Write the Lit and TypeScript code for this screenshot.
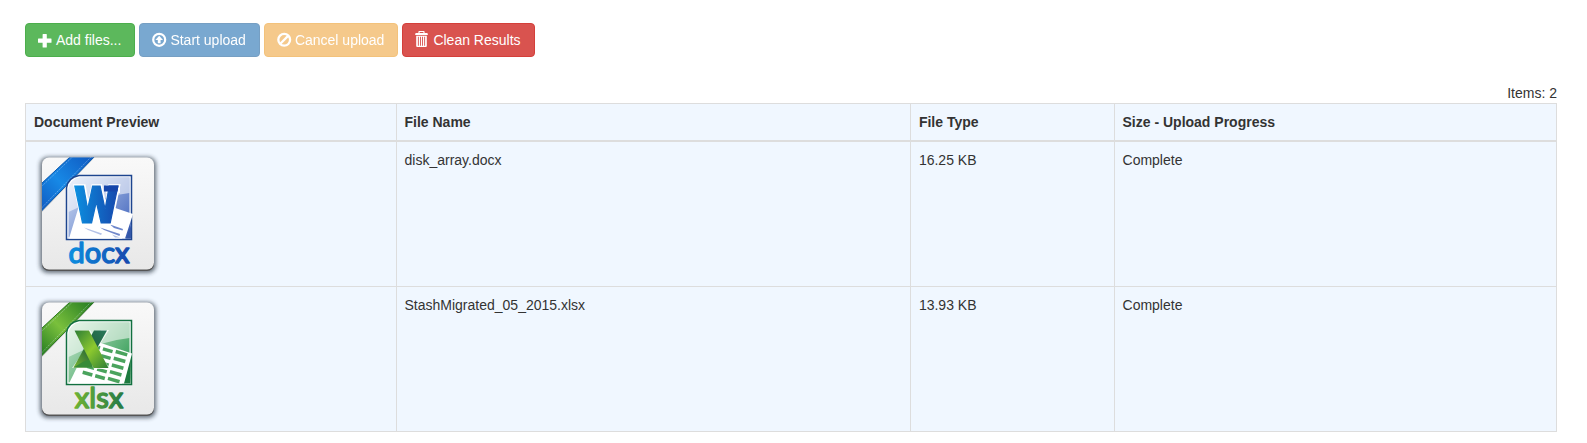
import { LitElement, html, svg, css } from "lit";
import { customElement, property, state } from "lit/decorators.js";

type Kind = "docx" | "xlsx";
interface UploadFile {
  name: string;
  size: string;
  status: string;
  kind: Kind;
}

const icons = {
  plus: svg`<path d="M5.1 1h3.200q.5 0 .5.5v4.100h4.200q.5 0 .5.5v3.200q0 .5-.5.5H8.800v4.200q0 .5-.5.5H5.100q-.5 0-.5-.5V9.800H.5q-.5 0-.5-.5V6.100q0-.5.500-.5h4.100V1.500q0-.5.5-.5z"/>`,
  upload: svg`<circle cx="7.200" cy="6.800" r="6" fill="none" stroke="currentColor" stroke-width="2.200"/><path d="M7.200 2.800 11 6.900H8.600v3.400H5.800V6.900H3.400z"/>`,
  ban: svg`<circle cx="7.200" cy="6.800" r="5.900" fill="none" stroke="currentColor" stroke-width="2.300"/><path d="M3.300 10.700 11.100 2.900" stroke="currentColor" stroke-width="2.300"/>`,
  trash: svg`<path fill-rule="evenodd" d="M4.200-2h4.600q.8 0 .8.8V0h2.200q1 0 1 1V2H.2V1q0-1 1-1h2.200V-1.200q0-.8.8-.8zM4.600-.9V0h3.800V-.9zM1.200 2.700h10.600V13q0 1-1 1H2.200q-1 0-1-1zM2.900 3.800v8.900h.9V3.800zM5 3.800v8.900h.9V3.800zM7.100 3.800v8.900H8V3.800zM9.200 3.800v8.900h.9V3.800z"/>`,
};

@customElement("file-preview")
class FilePreview extends LitElement {
  @property() kind: Kind = "docx";

  static styles = css`
    :host { display: block; width: 128px; height: 128px; }
    svg { display: block; width: 100%; height: 100%; }
    .label { font-family: Lato, "Liberation Sans", sans-serif; font-size: 29px; text-anchor: middle; }
    .mark { font-family: Roboto, "Liberation Sans", sans-serif; font-weight: 900; font-size: 51px; text-anchor: middle; }
  `;

  private word() {
    return svg`
      <path d="M97 64 88 88.500h8.500z" fill="#3d5fb3"/>
      <path d="M48 46 68 53.500 99 64 91 88.500H35z" fill="#fff"/>
      <path d="M97.500 74 92 88.500h5z" fill="#3558a8"/>
      <path d="m76 74.500 13 4.500-.5 1.500L80 78z" fill="#6d86cb"/>
      <path d="m66 77.500 20 6.500-.5 2L70 80z" fill="#7288ca"/>
      <path d="m50 77.500 18 6-1 1.500-13-5z" fill="#b3c1e6"/>
      <path d="m78 84.500 8 3h-5z" fill="#b3c1e6"/>
      <text class="mark" x="63" y="72.500" fill="#fff" stroke="#fff" stroke-width="3.500">W</text>
      <path d="M72 35h14v8H72z" fill="#fff"/>
      <text class="mark" x="62.500" y="72.500" fill="url(#ink)" stroke="url(#ink)" stroke-width="1.200">W</text>
      <path d="M70 35.500h14.500l-1 6H70z" fill="#1646ab"/>`;
  }

  private sheet() {
    const rows = [0, 1, 2, 3, 4];
    return svg`
      <path d="M97 60 88 88.500h8.500z" fill="#1d7a3e"/>
      <path d="M58 45 98 58.500 90 88.500H35L48 62z" fill="#fff"/>
      <clipPath id="page"><path d="M34 44H98L90.500 88.500H34z"/></clipPath>
      <g clip-path="url(#page)">
        <g transform="translate(69 50) rotate(16)" fill="#4aa35d">
          ${rows.map((r) => svg`<rect x="-12" y=${r * 7 + 2} width="10" height="3.500" /><rect x="1" y=${r * 7 + 2} width="10" height="3.500"/><rect x="14" y=${r * 7 + 1} width="12" height="3.500"/>`)}
        </g>
      </g>
      <path d="M40 35h16l6 9 5-9h8L63 54l13 20H60l-4-6-4 5H38l14-20z" fill="#fff" opacity=".75"/>
      <path d="M60 35.500h13L52 72.500H39.500z" fill="url(#dark)"/>
      <path d="M39.500 72.500h19v-9l-9 3z" fill="#388b39"/>
      <path d="M40.500 35.500h14.500L74.500 73H59.500z" fill="url(#cross)"/>`;
  }

  render() {
    const blue = this.kind === "docx";
    const c = blue
      ? { a: "#0b8fe0", b: "#1648ad", edge: "#1d458f", bg1: "#d3e0f5", bg2: "#4a6cc0", r1: "#1059c0", r2: "#1789e6", ribbon: "#0958ae" }
      : { a: "#6fb234", b: "#257a46", edge: "#127040", bg1: "#c9e8cf", bg2: "#2f9a52", r1: "#227a22", r2: "#7ac03c", ribbon: "#28761f" };
    return html`<svg viewBox="0 0 128 128" role="img" aria-label="${this.kind} document">
      <defs>
        <linearGradient id="tile" x1="0" y1="0" x2="0" y2="1"><stop stop-color="#f9f9f9"/><stop offset="1" stop-color="#e8e8e8"/></linearGradient>
        <linearGradient id="ink"><stop stop-color=${c.a}/><stop offset="1" stop-color=${c.b}/></linearGradient>
        <linearGradient id="cross" x1="0" y1="0" x2="1" y2="1"><stop stop-color="#2c7d35"/><stop offset=".5" stop-color="#8dc92e"/><stop offset="1" stop-color="#2c7d35"/></linearGradient>
        <linearGradient id="dark" x1="1" y1="0" x2="0" y2="1"><stop stop-color="#29785b"/><stop offset=".5" stop-color="#205f3a"/><stop offset="1" stop-color="#79b92f"/></linearGradient>
        <linearGradient id="back" x1="0" y1="0" x2="1" y2=".8"><stop stop-color=${c.bg1}/><stop offset="1" stop-color=${c.bg2}/></linearGradient>
        <linearGradient id="ribbon" x1="0" y1="1" x2="1" y2="0"><stop stop-color=${c.r1}/><stop offset=".45" stop-color=${c.r2}/><stop offset="1" stop-color=${c.r1}/></linearGradient>
        <filter id="shadow" x="-10%" y="-10%" width="120%" height="120%"><feGaussianBlur stdDeviation="2"/></filter>
        <clipPath id="shape"><rect x="8" y="7.500" width="112" height="112" rx="7"/></clipPath>
      </defs>
      <rect x="6" y="7" width="116" height="116" rx="8" fill="#26303c" opacity=".68" filter="url(#shadow)"/>
      <rect x="8" y="8.500" width="112" height="112.500" rx="7" fill="#555"/>
      <rect x="8" y="7.500" width="112" height="112" rx="7" fill="url(#tile)"/>
      <g clip-path="url(#shape)">
        <path d="M62 6 6 64V34z" fill="#777" opacity=".35"/>
        <path d="M36 7H60L7 61.500V34z" fill="url(#ribbon)"/>
        <path d="M36 7H60L7 61.500V34z" fill="none" stroke=${c.ribbon} stroke-width="1"/>
        <path d="M38.500 7 7 37M57 7 7 58.500" stroke="#d8ecff" stroke-width=".6" stroke-dasharray="1.500 1" opacity=".7"/>
      </g>
      <path d="M45 25.500H97.500V89.500H32.500V38Q34 27.500 45 25.500z" fill="#fff" stroke=${c.edge} stroke-width="1.500"/>
      <path d="M46 27.500H95.500V87.500H34.500V39Q36 29 46 27.500z" fill="url(#back)"/>
      <path d="M46 27.500H95.500V43Q66 46 34.500 62V39Q36 29 46 27.500z" fill="#fff" opacity=".55"/>
      ${blue ? this.word() : this.sheet()}
      <text class="label" x="65" y="113" fill="url(#ink)" stroke="url(#ink)" stroke-width="1.500" stroke-linejoin="round">${this.kind}</text>
    </svg>`;
  }
}

@customElement("app-root")
class AppRoot extends LitElement {
  @state() private files: UploadFile[] = [
    { name: "disk_array.docx", size: "16.25 KB", status: "Complete", kind: "docx" },
    { name: "StashMigrated_05_2015.xlsx", size: "13.93 KB", status: "Complete", kind: "xlsx" },
  ];

  static styles = css`
    :host {
      display: block;
      box-sizing: border-box;
      padding: 23px 30px 11px 25px;
      background: #fff;
      color: #333;
      font: 14px/20px "Liberation Sans", Arial, sans-serif;
    }
    .toolbar { display: flex; flex-wrap: wrap; gap: 4px; margin-bottom: 26px; }
    .btn {
      display: flex;
      align-items: center;
      gap: 4px;
      padding: 6px 13px 6px 12px;
      border: 1px solid;
      border-radius: 4px;
      color: #fff;
      font: inherit;
      white-space: nowrap;
      cursor: pointer;
    }
    .btn:disabled { opacity: 0.65; cursor: not-allowed; }
    .success { background: #5cb85c; border-color: #4cae4c; }
    .primary { background: #337ab7; border-color: #2e6da4; }
    .warning { background: #f0ad4e; border-color: #eea236; }
    .danger { background: #d9534f; border-color: #d43f3a; }
    .icon { width: 14px; height: 14px; overflow: visible; fill: currentColor; }
    .count { text-align: right; }
    .files {
      width: 100%;
      table-layout: fixed;
      border-collapse: collapse;
      background: #f0f7ff;
    }
    .files th, .files td {
      box-sizing: border-box;
      padding: 8px;
      border: 1px solid #ddd;
      text-align: left;
      vertical-align: top;
      overflow-wrap: anywhere;
    }
    .files th { border-bottom-width: 2px; }
    .preview { width: 24.2%; }
    .name { width: 33.6%; }
    .type { width: 13.3%; }
  `;

  private icon(name: keyof typeof icons) {
    return html`<svg class="icon" viewBox="0 0 14 14" aria-hidden="true">${icons[name]}</svg>`;
  }

  render() {
    return html`
      <div class="toolbar">
        <button type="button" class="btn success">${this.icon("plus")}<span>Add files...</span></button>
        <button type="button" class="btn primary" disabled>${this.icon("upload")}<span>Start upload</span></button>
        <button type="button" class="btn warning" disabled>${this.icon("ban")}<span>Cancel upload</span></button>
        <button type="button" class="btn danger" @click=${() => (this.files = [])}>${this.icon("trash")}<span>Clean Results</span></button>
      </div>
      <div class="count">Items: ${this.files.length}</div>
      <table class="files">
        <thead>
          <tr>
            <th scope="col" class="preview">Document Preview</th>
            <th scope="col" class="name">File Name</th>
            <th scope="col" class="type">File Type</th>
            <th scope="col">Size - Upload Progress</th>
          </tr>
        </thead>
        <tbody>
          ${this.files.map(
            (f) => html`<tr>
              <td><file-preview .kind=${f.kind}></file-preview></td>
              <td>${f.name}</td>
              <td>${f.size}</td>
              <td>${f.status}</td>
            </tr>`
          )}
        </tbody>
      </table>
    `;
  }
}
